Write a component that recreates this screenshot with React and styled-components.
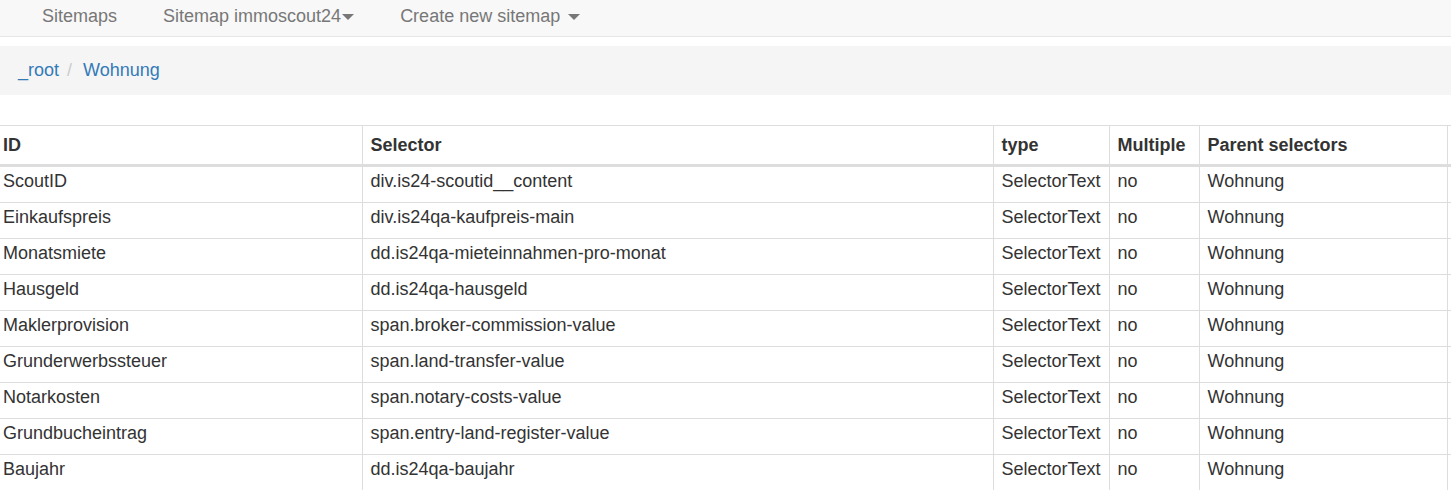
import React from "react";
import styled, { createGlobalStyle } from "styled-components";

const Global = createGlobalStyle`
  html, body { margin: 0; padding: 0; background: #fff; }
  body {
    font-family: "Liberation Sans", Arial, sans-serif;
    font-size: 18px;
    line-height: 25px;
    color: #333;
    overflow: hidden;
  }
`;

const Page = styled.div`
  width: 1451px;
  overflow: hidden;
`;

const Navbar = styled.nav`
  display: flex;
  align-items: center;
  background: #f8f8f8;
  border-bottom: 1px solid #e7e7e7;
  padding: 4px 0 7px 19px;
  height: 25px;
`;

const NavItem = styled.a`
  display: flex;
  align-items: center;
  gap: ${(p) => (p.$spaced ? "8px" : "1px")};
  padding: 0 23px;
  color: #777;
  text-decoration: none;
  white-space: nowrap;
`;

const Caret = styled.span`
  display: inline-block;
  width: 0;
  height: 0;
  border-left: 6px solid transparent;
  border-right: 6px solid transparent;
  border-top: 6px solid #777;
  margin-top: 1px;
`;

const Breadcrumb = styled.ol`
  list-style: none;
  margin: 9px 0 30px;
  padding: 12px 18px;
  background: #f5f5f5;
  display: flex;
`;

const Crumb = styled.li`
  a { color: #337ab7; text-decoration: none; }
  & + &::before {
    content: "/\\00a0";
    padding: 0 6px 0 8px;
    color: #ccc;
  }
`;

const TableWrap = styled.div`
  width: 1451px;
  overflow: hidden;
`;

const Table = styled.table`
  border-collapse: collapse;
  table-layout: fixed;
  width: 1650px;
`;

const Th = styled.th`
  text-align: left;
  font-weight: bold;
  color: #333;
  padding: 7px 8px 6px;
  border-top: 1px solid #ddd;
  border-left: 1px solid #ddd;
  border-bottom: 3px solid #ddd;
  white-space: nowrap;
  &:first-child { border-left: none; padding-left: 3px; }
`;

const Td = styled.td`
  padding: 2px 8px 8px;
  border-left: 1px solid #ddd;
  border-bottom: 1px solid #ddd;
  vertical-align: top;
  white-space: nowrap;
  &:first-child { border-left: none; padding-left: 3px; }
`;

const rows = [
  ["ScoutID", "div.is24-scoutid__content"],
  ["Einkaufspreis", "div.is24qa-kaufpreis-main"],
  ["Monatsmiete", "dd.is24qa-mieteinnahmen-pro-monat"],
  ["Hausgeld", "dd.is24qa-hausgeld"],
  ["Maklerprovision", "span.broker-commission-value"],
  ["Grunderwerbssteuer", "span.land-transfer-value"],
  ["Notarkosten", "span.notary-costs-value"],
  ["Grundbucheintrag", "span.entry-land-register-value"],
  ["Baujahr", "dd.is24qa-baujahr"],
];

export default function App() {
  return (
    <Page>
      <Global />
      <Navbar>
        <NavItem>Sitemaps</NavItem>
        <NavItem>
          Sitemap immoscout24
          <Caret />
        </NavItem>
        <NavItem $spaced>
          Create new sitemap
          <Caret />
        </NavItem>
      </Navbar>
      <Breadcrumb>
        <Crumb><a href="#">_root</a></Crumb>
        <Crumb><a href="#">Wohnung</a></Crumb>
      </Breadcrumb>
      <TableWrap>
        <Table>
          <colgroup>
            <col style={{ width: 362 }} />
            <col style={{ width: 631 }} />
            <col style={{ width: 116 }} />
            <col style={{ width: 90 }} />
            <col style={{ width: 248 }} />
            <col style={{ width: 203 }} />
          </colgroup>
          <thead>
            <tr>
              <Th>ID</Th>
              <Th>Selector</Th>
              <Th>type</Th>
              <Th>Multiple</Th>
              <Th>Parent selectors</Th>
              <Th></Th>
            </tr>
          </thead>
          <tbody>
            {rows.map(([id, sel]) => (
              <tr key={id}>
                <Td>{id}</Td>
                <Td>{sel}</Td>
                <Td>SelectorText</Td>
                <Td>no</Td>
                <Td>Wohnung</Td>
                <Td></Td>
              </tr>
            ))}
          </tbody>
        </Table>
      </TableWrap>
    </Page>
  );
}
